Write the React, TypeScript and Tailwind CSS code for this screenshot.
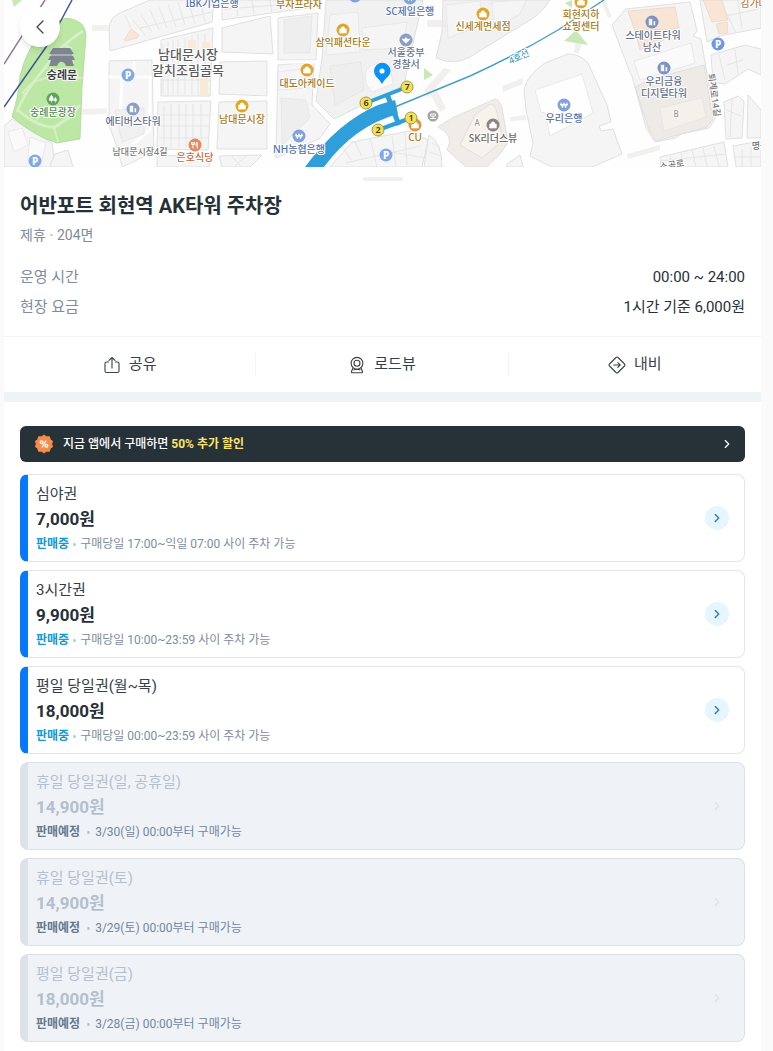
import React from "react";
import { ChevronLeft, ChevronRight } from "lucide-react";

interface Ticket {
    name: string;
    price: string;
    status: string;
    detail: string;
    onSale: boolean;
}

const TICKETS: Ticket[] = [
    { name: "심야권", price: "7,000원", status: "판매중", detail: "구매당일 17:00~익일 07:00 사이 주차 가능", onSale: true },
    { name: "3시간권", price: "9,900원", status: "판매중", detail: "구매당일 10:00~23:59 사이 주차 가능", onSale: true },
    { name: "평일 당일권(월~목)", price: "18,000원", status: "판매중", detail: "구매당일 00:00~23:59 사이 주차 가능", onSale: true },
    { name: "휴일 당일권(일, 공휴일)", price: "14,900원", status: "판매예정", detail: "3/30(일) 00:00부터 구매가능", onSale: false },
    { name: "휴일 당일권(토)", price: "14,900원", status: "판매예정", detail: "3/29(토) 00:00부터 구매가능", onSale: false },
    { name: "평일 당일권(금)", price: "18,000원", status: "판매예정", detail: "3/28(금) 00:00부터 구매가능", onSale: false },
];

// [text, x, y, size, color]
const LABELS: [string, number, number, number, string][] = [
    ["IBK기업은행", 212, 7, 10, "#5470a8"],
    ["부자프라자", 299, 8, 10, "#a87a20"],
    ["SC제일은행", 410, 15, 10, "#5470a8"],
    ["삼익패션타운", 343, 46, 10, "#a87a20"],
    ["서울중부", 406, 56, 10, "#66708a"],
    ["경찰서", 406, 68, 10, "#66708a"],
    ["신세계면세점", 483, 30, 10, "#a87a20"],
    ["회현지하", 581, 18, 10, "#a87a20"],
    ["쇼핑센터", 581, 30, 10, "#a87a20"],
    ["스테이트타워", 653, 39, 10, "#66708a"],
    ["남산", 652, 51, 10, "#66708a"],
    ["우리금융", 664, 85, 10, "#66708a"],
    ["디지털타워", 664, 97, 10, "#66708a"],
    ["대도아케이드", 307, 87, 10, "#a87a20"],
    ["남대문시장", 242, 123, 10, "#a87a20"],
    ["은호식당", 195, 161, 10, "#c46a3d"],
    ["에티버스타워", 133, 125, 10, "#66708a"],
    ["남대문시장4길", 140, 155, 9, "#7c7c7c"],
    ["NH농협은행", 299, 153, 10, "#5470a8"],
    ["우리은행", 564, 122, 10, "#5470a8"],
    ["CU", 415, 141, 10, "#a87a20"],
    ["SK리더스뷰", 493, 142, 10, "#6b6763"],
    ["숭례문광장", 53, 116, 10, "#4f8a4c"],
    ["김가네", 754, 7, 10, "#b9824f"],
    ["명동", 760, 149, 9, "#6f6f6f"],
    ["A", 477, 126, 8, "#9a938c"],
    ["B", 676, 117, 8, "#9a938c"],
];

const PIN_ICONS: [string, number, number, string][] = [
    ["P", 128, 75, "#82a8e8"],
    ["P", 35, 161, "#82a8e8"],
    ["P", 386, 155, "#82a8e8"],
    ["P", 718, 44, "#6f97e2"],
    ["building", 133, 109, "#8b9ec6"],
    ["building", 652, 22, "#7c92c4"],
    ["building", 664, 68, "#7c92c4"],
    ["won", 299, 136, "#82a0dc"],
    ["won", 564, 105, "#82a0dc"],
    ["won", 410, -2, "#82a0dc"],
    ["won", 355, -4, "#82a0dc"],
    ["police", 406, 40, "#8b9ec6"],
    ["bag", 343, 30, "#e0a52f"],
    ["bag", 307, 70, "#e0a52f"],
    ["bag", 483, 14, "#e0a52f"],
    ["bag", 581, 2, "#e0a52f"],
    ["bag", 242, 106, "#e0a81f"],
    ["bag", 415, 125, "#e0963c"],
    ["bag", 493, 125, "#8a8482"],
    ["food", 195, 145, "#e58a62"],
    ["tree", 53, 99, "#5fa35c"],
];

const EXITS: [string, number, number][] = [
    ["7", 407, 87],
    ["6", 366, 103],
    ["1", 411, 118],
    ["2", 378, 130],
];

const PinIcon: React.FC<{ kind: string; x: number; y: number; color: string }> = ({ kind, x, y, color }) => (
    <g transform={`translate(${x} ${y})`}>
        <circle r="6.5" fill={color} />
        {kind === "building" && (
            <path d="M-3.5 3.5V-3.5H.5V3.5ZM1.2-1H3.5V3.5H1.2Z M-2.4-2h.8M-2.4 0h.8M-2.4 2h.8" fill="#fff" stroke={color} strokeWidth=".6" />
        )}
        {kind === "bag" && (
            <path d="M-3.3-1H3.3V3H-3.3ZM-1.6-1V-2.4Q0-4 1.6-2.4V-1" fill="#fff" stroke="#fff" strokeWidth=".7" />
        )}
        {kind === "food" && (
            <path d="M-2 3.5V-3M-3.3-3V-.5H-.7V-3M2.2 3.5V-3Q.5-2 1 .5H2.2" fill="none" stroke="#fff" strokeWidth="1" />
        )}
        {kind === "tree" && (
            <path d="M-1.5-3.8Q-4.5 0-3.6 1.5H.3Q1-.8-1.5-3.8ZM-1.5 1V3.6M2.3-1.5Q.8.5 1.3 1.8H3.6Q4 .5 2.3-1.5ZM2.4 1.5V3.6" fill="#fff" stroke="#fff" strokeWidth=".6" />
        )}
        {kind === "won" && (
            <path d="M-3.2-2.4-1.6 2.4 0-2 1.6 2.4 3.2-2.4M-4-.4H4" fill="none" stroke="#fff" strokeWidth="1.1" strokeLinejoin="round" />
        )}
        {kind === "police" && (
            <path d="M-4.5-1.5-1.5-1 0-3 1.5-1 4.500-1.5 2.500 1.200 0 3.500-2.500 1.200Z" fill="#fff" />
        )}
        {kind === "P" && (
            <text y="3.5" textAnchor="middle" fontSize="10" fontWeight="800" fill="#fff">
                P
            </text>
        )}
    </g>
);

const MapView: React.FC = () => (
    <svg
        viewBox="4 0 757 167"
        preserveAspectRatio="xMidYMid slice"
        className="block h-[167px] w-full font-['Noto_Sans','Noto_Sans_CJK_KR',sans-serif]"
        role="img"
        aria-label="주차장 지도"
    >
        <rect x="0" y="0" width="773" height="167" fill="#fefefe" />

        {/* city blocks */}
        <g fill="#f5f5f5" stroke="#e0e0e0" strokeWidth="1" strokeLinejoin="round">
            <path d="M4 126 12 119 52 143 55 167H4Z" />
            <path d="M51 163 55 154 68 150 73 167H50Z" />
            <path d="M110 51 109 28Q110 17 120 13L150 0H214L212 22Z" />
            <path d="M109 61 152 60 154 152 122 167 117 147 109 125Z" />
            <path d="M161 40 213 28 210 96H161Z" />
            <path d="M158 102 211 101 208 150 157 149Z" />
            <path d="M222 28 270 16 273 54 222 52Z" />
            <path d="M220 62 267 61V96L219 94Z" />
            <path d="M219 102 267 101V149H217Z" />
            <path d="M222 0H318L315 7 222 20Z" />
            <path d="M278 18 318 13 316 60H278Z" />
            <path d="M278 65 314 62 312 105 330 124 320 138 276 158Z" />
            <path d="M326 0H423L408 65 404 85 334 119 316 101 322 58Z" fill="#f1f1f1" />
            <path d="M443 0H550Q543 12 530 20L470 57Q454 66 436 58L442 32Z" fill="#f1f1f1" />
            <path d="M352 142 410 131 428 140 422 167H330Z" />
            <path d="M429 135Q442 142 442 167H424Z" />
            <path d="M452 118 495 99Q500 100 502 108L508 142 500 154 487 167H466L447 150Q455 135 438 127Z" fill="#f0ede9" />
            <path d="M475 115 490 104Q494 104 496 109L503 140 482 158 460 145Z" fill="#f6f3ed" />
            <path d="M524 90Q527 75 545 63L568 54Q580 54 588 63L607 105 611 122 599 126 601 131 613 129 622 154 592 167H552L530 156 533 143 526 110Z" />
            <path d="M612 25 626 9 690 2 697 31 693 36 701 39 715 119 709 128 681 134 676 138 655 142 646 128 635 87 632 76 629 70Z" />
            <path d="M635 87 651 79 704 65 713 119 707 127 656 141 649 130Z" fill="#eeeae6" />
            <path d="M700 0H761V28L720 36 707 42Z" />
            <path d="M711 55 745 45 761 49V75L748 69 725 84 713 82Z" />
            <path d="M724 102 738 96 744 101 742 138 726 139Z" />
            <path d="M748 95 761 110V138H747Z" />
            <path d="M660 157 724 142 728 167H661Z" />
            <path d="M733 146 761 141V167H736Z" />
            <path d="M219 156 262 155 250 167H222Z" />
            <path d="M157 156 207 155 210 167H157Z" />
            <path d="M507 164 520 155 523 167H507Z" />
        </g>
        <g fill="none" stroke="#fefefe" strokeWidth="3">
            <path d="M109 77H152M122 77 120 120M134 61V76M150 78V130L132 145" />
            <path d="M278 62H316M219 98H268" />
        </g>

        {/* buildings */}
        <g fill="#fafafa" stroke="#e5e5e5" strokeWidth=".8">
            <path d="M535 90 582 74 593 113 550 136 545 113 541 112Z" fill="#fefefe" />
            <path d="M634 61 651 56 675 48 691 43 695 63 640 80Z" />
            <path d="M330 15 358 12 360 52 326 55ZM362 28 407 22 403 48 363 50ZM278 72 309 68V88L278 90ZM446 5 480 1 482 25 448 38ZM492 2 526 0 520 14 494 28Z" fill="#f5f5f5" />
            <path d="M284 20 312 16 310 53H284ZM281 98 306 100 310 118 282 145ZM330 66 361 62 364 90 335 105Z" fill="#eeeeee" />
            <path d="M366 84Q362 66 376 64L390 66 393 84 372 92Z" />
            <path d="M8 132 22 128 28 145 14 152ZM30 137 46 143 42 160 28 158Z" />
            <path d="M115 110 144 108V134L122 142Z" fill="#f0f0f0" />
            <path d="M660 108 702 98 706 117 664 131Z" fill="#f4f0ea" />
        </g>
        <g fill="none" stroke="#e1e1e1" strokeWidth=".8">
            <path d="M163 44V94M168 42V95M173 40V95M178 40V95M185 38V95M192 36V95M198 34V95M205 33V95M161 56H210M161 68H210M161 80H210" />
            <path d="M164 105V148M171 104V148M179 104V148M186 104V148M193 104V148M201 104V148M159 115H209M159 126H209M159 138H209" />
            <path d="M133 20 146 36M141 15 152 32M150 10 159 30M159 7 167 28M168 4 176 27M178 2 185 25M188 1 195 24M200 0 205 22M140 28 212 12M125 15 131 28" />
            <path d="M225 9 318 2M235 0 238 16M252 0 254 14M270 0 272 12M287 0 289 8M304 0 305 8" />
            <path d="M342 146 351 160M355 142 362 157M370 138 377 167M392 136 396 167M405 133 407 165M345 163 421 146M380 150 425 158" />
            <path d="M432 143 440 148M429 152 441 156" />
            <path d="M670 156 673 167M681 153 684 167M692 150 696 167M703 148 707 167M714 146 719 167M661 161 726 154" />
            <path d="M712 4 727 14 736 33M738 0 742 28M716 18 759 9M727 65 743 60M719 55 725 80M735 49 738 74M727 110 741 116M732 99 730 137" />
            <path d="M742 150V167M751 147V167M734 157H761M232 156 241 167M246 156 234 167" />
        </g>
        <g fill="#f9e5d6" stroke="#ecd6c6" strokeWidth=".8">
            <path d="M124 40 131 29 139 35 137 38 126 41Z" />
            <path d="M628 11 675 7 679 28 636 34Z" />
            <path d="M635 31 662 29 664 40 640 50Z" />
            <path d="M703 0H722L728 20 712 22ZM716 24 727 22 728 33 719 34Z" />
        </g>
        <path d="M202 42H210V54H202ZM188 40H196V50H188ZM200 78H208V95H200Z" fill="#f8ead9" />
        <g fill="#ecebea" opacity=".7">
            <path d="M92 25H109V31H92ZM80 109 107 108V114L80 115ZM502 86 523 78V84L503 92ZM510 117 526 115V120L510 121Z" />
            <path d="M427 20H446V27H427ZM605 0 612 17 608 18 601 0ZM576 38 584 40 578 54 574 52ZM627 154 660 145V150L628 159Z" />
            <path d="M424 90 444 68 451 70 427 98ZM436 88 446 108 440 112 430 94Z" />
        </g>

        {/* green areas */}
        <path d="M12 0H22L14 7ZM564 41 576 30 588 45ZM565 3 572 0V8ZM424 68 433 75 424 80Z" fill="#c9e8b8" />
        <path d="M66 18Q86 20 86 36L82 88 80 139 57 143Q36 137 12 117 19 96 20 76 27 46 48 25Z" fill="#bde7a4" stroke="#afd79b" strokeWidth=".8" />
        <g fill="none" stroke="#d6efc6" strokeWidth="3">
            <path d="M83 31Q60 45 45 68 25 90 17 112" />
            <path d="M18 110Q38 128 55 127L68 118 80 105" />
            <path d="M22 94Q32 78 55 77L82 78M54 127 58 142M35 122 47 107" strokeWidth="2" />
            <path d="M69 46Q66 55 72 65" strokeWidth="6" />
        </g>

        {/* subway lines */}
        <path d="M45 0 4 64" stroke="#8f7592" strokeWidth="1.4" />
        <path d="M72 0 58 26 46 47 4 107" fill="none" stroke="#3f5795" strokeWidth="1.5" />
        <path d="M390 109 470 76Q518 54 558 30L604 0" fill="none" stroke="#479fc2" strokeWidth="1.4" />
        <path d="M305 167Q338 122 378 105L395 100 398 114Q354 126 324 167Z" fill="#2e9fdb" />
        <path d="M366 103 407 87M378 130 411 118" stroke="#2e9fdb" strokeWidth="4" />
        <path d="M387 94 399 125" stroke="#2e9fdb" strokeWidth="5" />

        {/* gate */}
        <g fill="#7f8590">
            <path d="M53 48H70L74 54H49Z" />
            <path d="M51 54H72V56H51Z" fill="#a9aeb6" />
            <path d="M50 56H73L75 60H48Z" />
            <path d="M51 60H72L74 66H66Q64 61 60 62 58 63 57 66H49Z" />
        </g>

        {PIN_ICONS.map(([kind, x, y, color], i) => (
            <PinIcon key={i} kind={kind} x={x} y={y} color={color} />
        ))}
        <g transform="translate(433 116)">
            <circle r="5.5" fill="#a5a5a5" />
            <path d="M-2.5-2H2.5V0H-2.5ZM0 0V2M-3 2.5H3" fill="none" stroke="#fff" strokeWidth="1" />
        </g>

        <g textAnchor="middle" fontWeight="500" stroke="#fff" strokeWidth="2" strokeLinejoin="round" paintOrder="stroke">
            {LABELS.map(([text, x, y, size, color]) => (
                <text key={text} x={x} y={y} fontSize={size} fill={color}>
                    {text}
                </text>
            ))}
            <text x="188" y="59" fontSize="13" fill="#5b5b5b">남대문시장</text>
            <text x="188" y="75" fontSize="13" fill="#5b5b5b">갈치조림골목</text>
            <text x="62" y="79" fontSize="11" fontWeight="700" fill="#3c3c3c">숭례문</text>
            <text x="519" y="60" fontSize="9" fill="#479fc2" transform="rotate(-25 519 57)">4호선</text>
            <text x="714" y="98" fontSize="9" fill="#777" transform="rotate(82 714 95)">퇴계로14길</text>
            <text x="672" y="168" fontSize="9" fill="#777" transform="rotate(-10 672 165)">소공로</text>
        </g>

        {EXITS.map(([n, x, y]) => (
            <g key={n}>
                <circle cx={x} cy={y} r="6" fill="#f6e04f" stroke="#a19a57" strokeWidth="1" />
                <text x={x} y={y + 3} textAnchor="middle" fontSize="9" fontWeight="600" fill="#3b3a2a">{n}</text>
            </g>
        ))}

        {/* selected parking lot */}
        <path d="M382 84Q379 79 376 76.5Q374 74 374 71A8 8 0 0 1 390.5 71Q390.5 74 388 76.5Q385 79 382 84Z" fill="#0a93f5" />
        <circle cx="382" cy="71" r="2.6" fill="#fff" />
    </svg>
);

const ShareIcon: React.FC = () => (
    <svg viewBox="0 0 18 18" className="size-[18px]" fill="none" stroke="currentColor" strokeWidth="1.1" strokeLinecap="round" strokeLinejoin="round" aria-hidden="true">
        <path d="M5.5 6H3.5Q2 6 2 7.5V15Q2 16.5 3.5 16.5H14.5Q16 16.500 16 15V7.5Q16 6 14.5 6H12.5M9 12V1.5M6 4.3 9 1.5 12 4.3" />
    </svg>
);

const RoadViewIcon: React.FC = () => (
    <svg viewBox="0 0 18 18" className="size-[18px]" fill="none" stroke="currentColor" strokeWidth="1.1" strokeLinejoin="round" aria-hidden="true">
        <circle cx="9" cy="7.3" r="5.9" />
        <circle cx="9" cy="7.3" r="3" />
        <path d="M5 11.8 3.5 15.5Q3.3 16.7 4.3 16.7H13.7Q14.7 16.7 14.5 15.5L13 11.8M5.5 14Q9 12.5 12.5 14" />
    </svg>
);

const NaviIcon: React.FC = () => (
    <svg viewBox="0 0 18 18" className="size-[18px]" fill="none" stroke="currentColor" strokeWidth="1.1" strokeLinecap="round" strokeLinejoin="round" aria-hidden="true">
        <path d="M8 1.5Q9 .6 10 1.5L16.5 8Q17.4 9 16.5 10L10 16.5Q9 17.4 8 16.5L1.5 10Q.6 9 1.5 8ZM5.8 9H12M9.8 6.6 12.2 9 9.8 11.4" />
    </svg>
);

const DiscountBadge: React.FC = () => (
    <svg viewBox="0 0 20 20" className="size-5" aria-hidden="true">
        <path
            d="M10 1 12.4 2.8 15.4 2.7 16.2 5.6 18.6 7.3 17.6 10 18.6 12.7 16.2 14.4 15.4 17.3 12.4 17.2 10 19 7.6 17.2 4.6 17.3 3.8 14.4 1.4 12.7 2.4 10 1.4 7.3 3.8 5.6 4.6 2.7 7.6 2.8Z"
            fill="#f78b4b"
            stroke="#f78b4b"
            strokeLinejoin="round"
        />
        <g fill="none" stroke="#fff" strokeWidth="1.3" strokeLinecap="round">
            <circle cx="7.6" cy="8.2" r="1.4" />
            <circle cx="12.4" cy="11.8" r="1.4" />
            <path d="M11.8 7 8.2 13" />
        </g>
    </svg>
);

const ACTIONS = [
    { label: "공유", icon: <ShareIcon /> },
    { label: "로드뷰", icon: <RoadViewIcon /> },
    { label: "내비", icon: <NaviIcon /> },
];

const TicketCard: React.FC<{ ticket: Ticket }> = ({ ticket }) => {
    const { name, price, status, detail, onSale } = ticket;

    return (
        <button
            type="button"
            disabled={!onSale}
            className={`flex w-full items-center justify-between rounded-lg border border-l-8 pr-[15px] pl-2 text-left ${
                onSale ? "border-[#e2e5e8] border-l-[#0878fa] bg-white" : "border-[#d9e0e8] border-l-[#dde2e9] bg-[#eff3f7]"
            }`}
        >
            <span className="flex min-w-0 flex-col pt-[7px] pb-[5px]">
                <span className={`text-[15px] leading-6 ${onSale ? "text-[#384047]" : "text-[#b6c0cd]"}`}>{name}</span>
                <span className={`text-[17px] leading-[26px] font-bold ${onSale ? "text-[#263038]" : "text-[#b3bfcd]"}`}>{price}</span>
                <span className={`flex items-center text-xs leading-6 ${onSale ? "text-[#808c9c]" : "text-[#75869a]"}`}>
                    <span className={`font-bold ${onSale ? "text-[#0c9bdb]" : "text-[#65788c]"}`}>{status}</span>
                    <span className={`size-[3px] rounded-full bg-[#bcc5cf] ${onSale ? "mx-1" : "mr-[5px] ml-[7px]"}`} />
                    <span>{detail}</span>
                </span>
            </span>
            <span
                className={`flex size-6 shrink-0 items-center justify-center rounded-full ${
                    onSale ? "bg-[#e6f5fe] text-[#2580c8]" : "text-[#dce3ea]"
                }`}
            >
                <ChevronRight className="size-3.5" strokeWidth={2.5} />
            </span>
        </button>
    );
};

const App: React.FC = () => {
    return (
        <div className="min-h-screen bg-[#fafafa] pr-3 pl-1 font-[Roboto,'Noto_Sans_CJK_KR',sans-serif] text-[#263038]">
            <main className="min-h-screen bg-white">
                <div className="relative">
                    <MapView />
                    <button
                        type="button"
                        aria-label="뒤로"
                        className="absolute top-[7px] left-4 flex size-10 items-center justify-center rounded-full bg-white text-[#444] shadow-md"
                    >
                        <ChevronLeft className="size-6" strokeWidth={1.3} />
                    </button>
                </div>

                <section className="px-4 pt-[10px] pb-[14px]">
                    <div className="mx-auto h-1 w-10 rounded-full bg-[#edf1f4]" />
                    <h1 className="mt-[9px] text-xl leading-8 font-bold">어반포트 회현역 AK타워 주차장</h1>
                    <p className="mt-0.5 text-sm leading-[22px] text-[#808c9c]">
                        제휴 <span className="font-bold text-[#bcc5cf]">·</span> 204면
                    </p>
                    <dl className="mt-4 text-[15px] leading-[30px]">
                        <div className="flex justify-between">
                            <dt className="text-[#808c9c]">운영 시간</dt>
                            <dd>00:00 ~ 24:00</dd>
                        </div>
                        <div className="flex justify-between">
                            <dt className="text-[#808c9c]">현장 요금</dt>
                            <dd>1시간 기준 6,000원</dd>
                        </div>
                    </dl>
                </section>

                <div className="grid grid-cols-3 divide-x divide-[#f2f4f6] border-t border-[#f2f4f6] py-4">
                    {ACTIONS.map(({ label, icon }) => (
                        <button key={label} type="button" className="flex h-[23px] items-center justify-center gap-2 text-[15px] text-[#384047]">
                            {icon}
                            {label}
                        </button>
                    ))}
                </div>

                <div className="h-[10px] bg-[#eff3f6]" />

                <section className="flex flex-col gap-2 px-4 pt-6 pb-[7px]">
                    <a href="#app" className="mb-1 flex h-9 items-center rounded-md bg-[#273138] pr-[11px] pl-[14px] text-xs font-medium text-white">
                        <DiscountBadge />
                        <span className="ml-[9px] flex-1">
                            지금 앱에서 구매하면 <strong className="font-bold text-[#fbe26d]">50% 추가 할인</strong>
                        </span>
                        <ChevronRight className="size-3.5" />
                    </a>
                    {TICKETS.map((ticket) => (
                        <TicketCard key={ticket.name} ticket={ticket} />
                    ))}
                </section>
            </main>
        </div>
    );
};

export default App;
